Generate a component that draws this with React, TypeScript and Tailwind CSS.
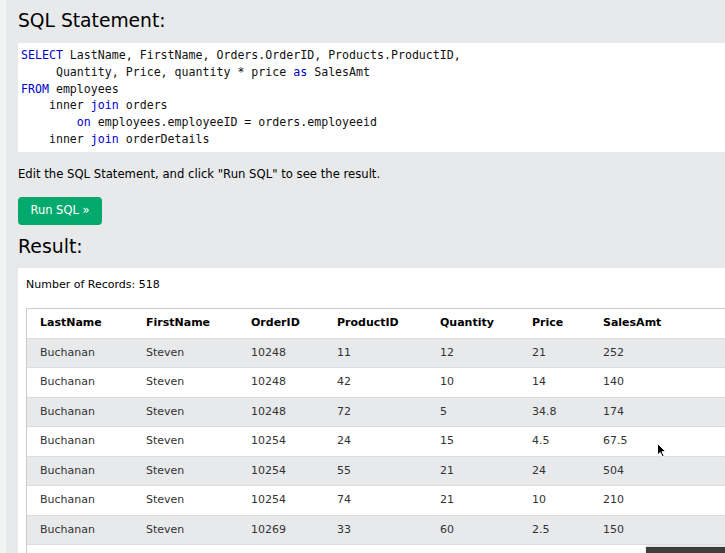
import React from "react";

type Row = {
    lastName: string;
    firstName: string;
    orderId: number;
    productId: number;
    quantity: number;
    price: number;
    salesAmt: number;
};

const rows: Row[] = [
    { lastName: "Buchanan", firstName: "Steven", orderId: 10248, productId: 11, quantity: 12, price: 21, salesAmt: 252 },
    { lastName: "Buchanan", firstName: "Steven", orderId: 10248, productId: 42, quantity: 10, price: 14, salesAmt: 140 },
    { lastName: "Buchanan", firstName: "Steven", orderId: 10248, productId: 72, quantity: 5, price: 34.8, salesAmt: 174 },
    { lastName: "Buchanan", firstName: "Steven", orderId: 10254, productId: 24, quantity: 15, price: 4.5, salesAmt: 67.5 },
    { lastName: "Buchanan", firstName: "Steven", orderId: 10254, productId: 55, quantity: 21, price: 24, salesAmt: 504 },
    { lastName: "Buchanan", firstName: "Steven", orderId: 10254, productId: 74, quantity: 21, price: 10, salesAmt: 210 },
    { lastName: "Buchanan", firstName: "Steven", orderId: 10269, productId: 33, quantity: 60, price: 2.5, salesAmt: 150 },
];

const headers = ["LastName", "FirstName", "OrderID", "ProductID", "Quantity", "Price", "SalesAmt"];

const gridCols = "grid grid-cols-[106px_105px_86px_103px_92px_71px_200px]";

const Kw: React.FC<{ children: React.ReactNode }> = ({ children }) => (
    <span className="text-[#0000cd]">{children}</span>
);

const App: React.FC = () => {
    return (
        <div
            className="relative w-[725px] h-[553px] overflow-hidden bg-[#f2f3f3] text-black"
            style={{ fontFamily: '"DejaVu Sans", Verdana, sans-serif' }}
        >
            <div className="ml-[6px] h-full bg-[#e7e9eb] pl-[12px] flex flex-col">
                <h2 className="pt-[9px] text-[18.7px] leading-[24px] font-normal">SQL Statement:</h2>

                <pre
                    className="mt-[10px] bg-white py-[4px] pl-[3px] text-[11.6px] leading-[16.8px] text-[#111]"
                    style={{ fontFamily: '"DejaVu Sans Mono", monospace' }}
                >
                    <Kw>SELECT</Kw> LastName, FirstName, Orders.OrderID, Products.ProductID,{"\n"}
                    {"     "}Quantity, Price, quantity * price <Kw>as</Kw> SalesAmt{"\n"}
                    <Kw>FROM</Kw> employees{"\n"}
                    {"    "}inner <Kw>join</Kw> orders{"\n"}
                    {"        "}<Kw>on</Kw> employees.employeeID = orders.employeeid{"\n"}
                    {"    "}inner <Kw>join</Kw> orderDetails
                </pre>

                <p className="mt-[14px] text-[11.65px] leading-[16px]">
                    Edit the SQL Statement, and click "Run SQL" to see the result.
                </p>

                <div className="mt-[15px]">
                    <button className="w-[84px] h-[28px] rounded-[4px] bg-[#04aa6d] text-white text-[11.5px] font-medium">
                        Run SQL »
                    </button>
                </div>

                <h2 className="mt-[9px] text-[18.9px] leading-[24px] font-normal">Result:</h2>

                <div className="mt-[10px] flex-1 bg-white pl-[8px] pt-[9px]">
                    <p className="text-[11px] leading-[16px]">Number of Records: 518</p>

                    <div className="mt-[15px] border-t border-l border-[#cccccc] text-[11px]">
                        <div className={`${gridCols} h-[30px] items-center border-b border-[#dddddd] bg-white font-bold`}>
                            {headers.map((h) => (
                                <div key={h} className="pl-[13px]">
                                    {h}
                                </div>
                            ))}
                        </div>
                        {rows.map((r, i) => (
                            <div
                                key={i}
                                className={`${gridCols} h-[29.5px] items-center border-b border-[#dddddd] text-[#333] ${
                                    i % 2 === 0 ? "bg-[#e7e9eb]" : "bg-white"
                                }`}
                            >
                                <div className="pl-[13px]">{r.lastName}</div>
                                <div className="pl-[13px]">{r.firstName}</div>
                                <div className="pl-[13px]">{r.orderId}</div>
                                <div className="pl-[13px]">{r.productId}</div>
                                <div className="pl-[13px]">{r.quantity}</div>
                                <div className="pl-[13px]">{r.price}</div>
                                <div className="pl-[13px]">{r.salesAmt}</div>
                            </div>
                        ))}
                        <div className="h-[30px] bg-white" />
                    </div>
                </div>
            </div>

            {/* mouse pointer */}
            <svg className="absolute left-[657px] top-[443px]" width="10" height="15" viewBox="0 0 10 15">
                <path d="M0.5 0.5 L0.5 12 L3.3 9.4 L5.4 14 L7.2 13.2 L5.1 8.7 L8.8 8.7 Z" fill="#000" stroke="#fff" strokeWidth="1" />
            </svg>

            {/* snackbar edge */}
            <div className="absolute left-[646px] top-[547px] w-[90px] h-[10px] bg-[#3d3d3d] shadow-[0_-1px_2px_rgba(0,0,0,0.2)]" />
        </div>
    );
};

export default App;
